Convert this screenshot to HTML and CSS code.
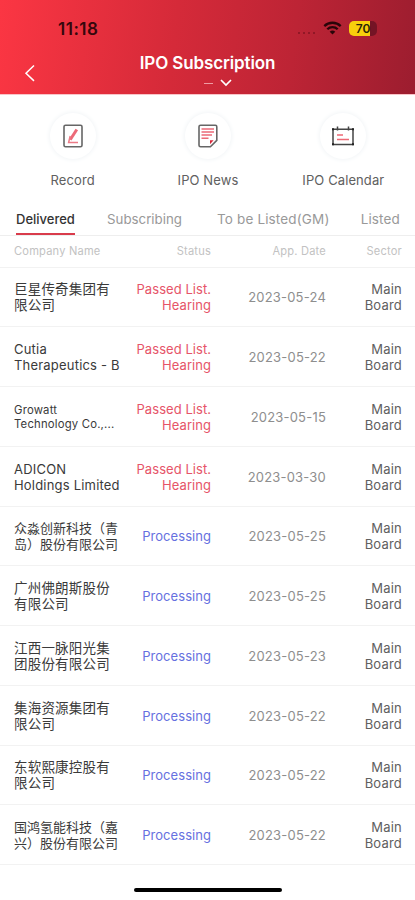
FILE: index.html
```html
<!DOCTYPE html>
<html lang="en">
<head>
<meta charset="utf-8">
<title>IPO Subscription</title>
<link rel="stylesheet" href="styles.css">
</head>
<body>
<header class="top">
  <div class="statusbar">
    <span class="time">11:18</span>
    <div class="indicators">
      <span class="dots"><i></i><i></i><i></i><i></i></span>
      <svg class="wifi" width="19" height="14" viewBox="0 0 19 14" fill="none" stroke="#2a0509" stroke-width="2.3"><path d="M1.3 5.1a11.7 11.7 0 0 1 16.4 0M4.3 8.2a7.4 7.4 0 0 1 10.4 0"/><path d="M9.5 13.6 6.7 10.8a4 4 0 0 1 5.6 0z" fill="#2a0509" stroke="none"/></svg>
      <span class="battery">70</span>
    </div>
  </div>
  <div class="titlebar">
    <svg class="back" width="12" height="18" viewBox="0 0 12 18" fill="none" stroke="#fff" stroke-width="1.5"><path d="M10 1.5 2 9.3l8 7.6"/></svg>
    <div class="heading">
      <h1>IPO Subscription</h1>
      <div class="account"><span class="dash"></span><svg width="12" height="8" viewBox="0 0 12 8" fill="none" stroke="#fff" stroke-width="1.7"><path d="m1 1 5 5 5-5"/></svg></div>
    </div>
  </div>
</header>
<nav class="shortcuts">
  <a class="shortcut"><span class="disc"><svg width="22" height="26" viewBox="0 0 22 26" fill="none"><rect x="2" y="2.2" width="18" height="21.6" rx="1.5" stroke="#666" stroke-width="1.6"/><path d="M14.8 6.5 8.2 16.8" stroke="#ec6a78" stroke-width="3"/><path d="m8.2 13-1.6 6.5H16" stroke="#ec7a86" stroke-width="1.5"/></svg></span>Record</a>
  <a class="shortcut"><span class="disc"><svg width="22" height="26" viewBox="0 0 22 26" fill="none"><path d="M2 3.8Q2 2.2 3.6 2.2h14.8q1.4 0 1.4 1.5v13.6L13.4 23.8H3.6Q2 23.8 2 22.2z" stroke="#666" stroke-width="1.6"/><path d="M4.5 6h12.5M4.5 9h12.5M4.5 12h10.5M4.5 15.3h7" stroke="#ec6a78" stroke-width="1.4"/><path d="M13 17.3h3.6L13 21.3z" fill="#d8283b"/></svg></span>IPO News</a>
  <a class="shortcut"><span class="disc"><svg width="24" height="22" viewBox="0 0 24 22" fill="none"><path d="M2 4.2h20v15.3H2zM6.5 1.5v4M17.5 1.5v4" stroke="#454545" stroke-width="1.5"/><path d="M6 10h6M6 14.5h12" stroke="#ed6a76" stroke-width="1.5"/><path d="M1 3.3h2v2H1zm20 0h2v2h-2zM1 18.3h2v2H1zm20 0h2v2h-2z" fill="#222"/></svg></span>IPO Calendar</a>
</nav>
<nav class="tabs"><a class="tab active">Delivered</a><a class="tab subscribing">Subscribing</a><a class="tab gm">To be Listed(GM)</a><a class="tab">Listed</a></nav>
<main class="list">
  <div class="row head"><span>Company Name</span><span>Status</span><span>App. Date</span><span>Sector</span></div>
  <div class="row"><span class="name" lang="zh">巨星传奇集团有<br>限公司</span><span class="status passed">Passed List.<br>Hearing</span><span class="date">2023-05-24</span><span class="sector">Main<br>Board</span></div>
  <div class="row"><span class="name">Cutia<br>Therapeutics - B</span><span class="status passed">Passed List.<br>Hearing</span><span class="date">2023-05-22</span><span class="sector">Main<br>Board</span></div>
  <div class="row"><span class="name small">Growatt<br>Technology Co.,...</span><span class="status passed">Passed List.<br>Hearing</span><span class="date">2023-05-15</span><span class="sector">Main<br>Board</span></div>
  <div class="row"><span class="name">ADICON<br>Holdings Limited</span><span class="status passed">Passed List.<br>Hearing</span><span class="date">2023-03-30</span><span class="sector">Main<br>Board</span></div>
  <div class="row"><span class="name long" lang="zh">众淼创新科技（青<br>岛）股份有限公司</span><span class="status">Processing</span><span class="date">2023-05-25</span><span class="sector">Main<br>Board</span></div>
  <div class="row"><span class="name" lang="zh">广州佛朗斯股份<br>有限公司</span><span class="status">Processing</span><span class="date">2023-05-25</span><span class="sector">Main<br>Board</span></div>
  <div class="row"><span class="name" lang="zh">江西一脉阳光集<br>团股份有限公司</span><span class="status">Processing</span><span class="date">2023-05-23</span><span class="sector">Main<br>Board</span></div>
  <div class="row"><span class="name" lang="zh">集海资源集团有<br>限公司</span><span class="status">Processing</span><span class="date">2023-05-22</span><span class="sector">Main<br>Board</span></div>
  <div class="row"><span class="name" lang="zh">东软熙康控股有<br>限公司</span><span class="status">Processing</span><span class="date">2023-05-22</span><span class="sector">Main<br>Board</span></div>
  <div class="row"><span class="name long" lang="zh">国鸿氢能科技（嘉<br>兴）股份有限公司</span><span class="status">Processing</span><span class="date">2023-05-22</span><span class="sector">Main<br>Board</span></div>
</main>
<div class="home"></div>
</body>
</html>
```
FILE: styles.css
```css
* { box-sizing: border-box; }
body {
  margin: 0;
  width: 415px;
  height: 900px;
  overflow: hidden;
  background: #fff;
  color: #444;
  font-family: Inter, "Noto Sans CJK SC", sans-serif;
  font-size: 13px;
}
.top {
  height: 95px;
  background: linear-gradient(97deg, #fb3643 0%, #d52a39 42%, #bd2435 70%, #9c1d2f 100%);
  border-bottom: 1px solid #f9c4c8;
}
.statusbar {
  height: 50px;
  padding: 7px 38px 0 58px;
  display: flex;
  align-items: center;
  justify-content: space-between;
}
.time { font-size: 17px; font-weight: 600; color: #35070c; line-height: 20px; letter-spacing: .5px; margin-top: 1px; }
.indicators { display: flex; align-items: center; }
.dots { display: flex; gap: 3px; margin: 9px 8px 0 0; }
.dots i { width: 2px; height: 2px; border-radius: 1px; background: #851522; }
.wifi { margin-right: 7px; margin-top: -2px; }
.battery {
  width: 28px;
  height: 15px;
  border-radius: 5px;
  background: linear-gradient(90deg, #f8d00c 0 21px, #741425 21px);
  color: #2b2508;
  font-size: 12px;
  font-weight: 600;
  line-height: 15px;
  text-align: center;
}
.titlebar { display: grid; grid-template-columns: 50px 315px 50px; }
.back { margin: 14px 0 0 24px; }
.heading { text-align: center; color: #fff; }
h1 { margin: 3px 0 0; font-size: 17px; line-height: 20px; font-weight: 600; letter-spacing: -.12px; }
.account { display: flex; align-items: center; justify-content: center; gap: 7px; height: 20px; padding-left: 20px; }
.dash { width: 9px; height: 1px; background: #ee9ba3; }
.shortcuts { height: 108px; display: flex; justify-content: space-between; padding: 18px 4px 0 5px; }
.shortcut { width: 136px; display: flex; flex-direction: column; align-items: center; color: #606060; font-size: 13px; letter-spacing: .1px; line-height: 18px; }
.disc { width: 46px; height: 46px; border-radius: 50%; display: flex; align-items: center; justify-content: center; margin-bottom: 12px; box-shadow: 0 0 4px 1px #f2f5f7; }
.tabs { height: 33px; display: flex; padding: 5px 15px 0 16px; border-bottom: 1px solid #eee; color: #999; font-size: 13.5px; }
.tab { line-height: 22px; height: 27px; border-bottom: 2px solid transparent; white-space: nowrap; letter-spacing: .15px; }
.tab.active { width: 59px; color: #333; border-color: #d93b4b; font-weight: 500; font-size: 13px; letter-spacing: 0; }
.tab.subscribing { margin-left: 32px; width: 75px; font-size: 13.3px; letter-spacing: 0; }
.tab.gm { margin-left: 35px; width: 112px; }
.tab:last-child { margin-left: auto; }
.row {
  height: 59.75px;
  display: grid;
  grid-template-columns: 116px 81px 115px 76px;
  align-items: center;
  padding: 1px 13px 0 14px;
  border-bottom: 1px solid #f2f2f2;
  line-height: 16px;
  letter-spacing: .2px;
  white-space: nowrap;
}
.row > span + span { text-align: right; }
.row.head { height: 31.5px; padding-top: 0; color: #c2c2c2; font-size: 11.1px; }
.name { color: #3a3a3a; }
.name[lang] { font-size: 13.5px; }
.name.long { font-size: 13px; letter-spacing: 0; }
.name.small { font-size: 11.3px; line-height: 14px; }
.status { color: #6670e0; letter-spacing: .05px; }
.status.passed { color: #e65468; }
.date { color: #8e8e8e; }
.sector { color: #606060; }
.home { width: 148px; height: 4px; border-radius: 2px; background: #000; margin: 23px auto 0; }
```
